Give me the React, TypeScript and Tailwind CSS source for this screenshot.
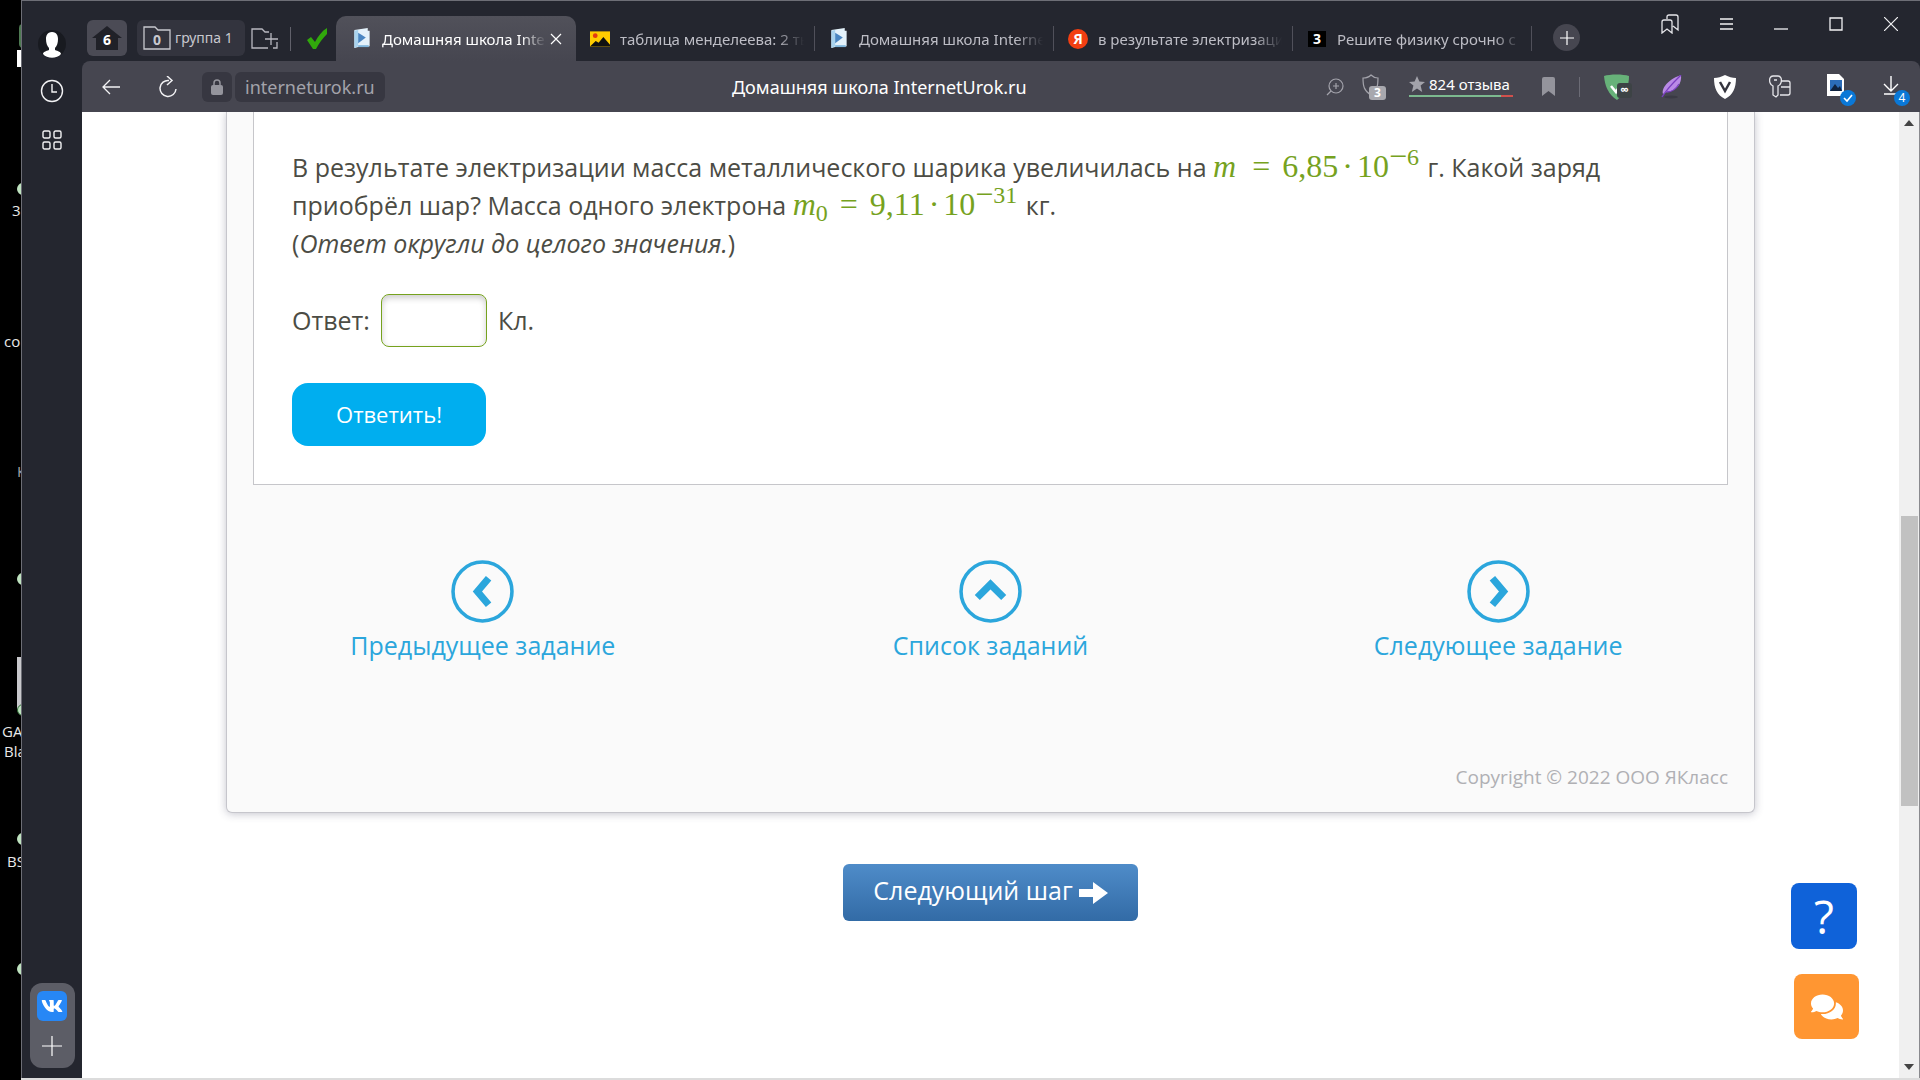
import type { ReactNode } from "react";
import { FaComments, FaVk } from "react-icons/fa";

interface TabItem {
  title: string;
  icon: ReactNode;
  active?: boolean;
}

const BookIcon = () => (
  <svg viewBox="0 0 18 22" className="h-[21px] w-[18px]">
    <path d="M1 2 15 0v3l2 0v16l-3 1-9 0-4 1z" fill="#e4f2fb" />
    <path d="M1 3 5 2v17l-4 2z" fill="#a9d3ee" />
    <path d="M5 18h11v2H5z" fill="#7fb6dc" />
    <path d="M5 5v11l8-6z" fill="#4a86c2" />
  </svg>
);

const PictureIcon = () => (
  <svg viewBox="0 0 21 16" className="h-4 w-[21px]">
    <path d="M0 0h21v16H0z" fill="#fc0" />
    <circle cx="5.5" cy="4.5" r="2.5" fill="#e33b12" />
    <path d="M0 16 6 10l3 2 5-6 7 8v2z" fill="#111" />
  </svg>
);

const tabs: TabItem[] = [
  { title: "Домашняя школа InternetUrok.ru", icon: <BookIcon />, active: true },
  { title: "таблица менделеева: 2 тыс", icon: <PictureIcon /> },
  { title: "Домашняя школа InternetUrok.ru", icon: <BookIcon /> },
  {
    title: "в результате электризации",
    icon: (
      <span className="flex size-5 items-center justify-center rounded-full bg-[#f33f12] text-sm font-bold text-white">
        Я
      </span>
    ),
  },
  {
    title: "Решите физику срочно с",
    icon: (
      <span className="flex h-4 w-[18px] items-center justify-center bg-black text-sm font-bold text-white">
        3
      </span>
    ),
  },
];

function Tab({ title, icon, active }: TabItem) {
  return (
    <div
      className={
        active
          ? "flex h-[45px] w-60 shrink items-center rounded-t-[10px] bg-linear-to-b from-[#51515a] to-[#464650] pr-3.5 pl-4 text-white"
          : "flex h-[45px] w-[239px] shrink items-center pr-0 pl-3.5 text-[#bdbdc5]"
      }
    >
      <span className="flex w-5 shrink-0 justify-center">{icon}</span>
      <button className="ml-[10px] min-w-0 flex-1 overflow-hidden text-left text-[15px] leading-6 whitespace-nowrap [mask-image:linear-gradient(to_right,#000_85%,transparent)]">
        {title}
      </button>
      {active ? (
        <button aria-label="Закрыть вкладку" className="ml-1">
          <svg viewBox="0 0 12 12" className="size-3" stroke="#fff" strokeWidth="1.2">
            <path d="m1 1 10 10M11 1 1 11" />
          </svg>
        </button>
      ) : (
        <span className="ml-2.5 h-[25px] w-px bg-[#50505a]" />
      )}
    </div>
  );
}

function TabBar() {
  return (
    <div className="flex h-[60px] items-end bg-[#24262f]">
      <button className="mb-[5px] ml-[5px] flex h-9 w-10 items-center justify-center rounded-md bg-[#4b4b55]">
        <span className="relative flex">
          <svg viewBox="0 0 30 24" className="h-6 w-[30px]" fill="#202128">
            <path d="M15 0 30 12h-4v12H4V12H0z" />
          </svg>
          <b className="absolute inset-x-0 top-1 text-sm text-white">6</b>
        </span>
      </button>
      <button className="mb-[5px] ml-[10px] flex h-9 w-[108px] items-center gap-1 rounded-md bg-[#33343e] pl-1.5 text-sm text-[#c8c8ce]">
        <span className="relative flex">
          <svg viewBox="0 0 28 24" className="h-6 w-7" fill="none" stroke="#c8c8ce" strokeWidth="1.3">
            <path d="M1 1h11l3 3h12v19H1z" />
          </svg>
          <b className="absolute inset-x-0 top-1 text-sm">0</b>
        </span>
        группа 1
      </button>
      <button aria-label="Новая группа" className="mb-[11px] ml-1.5">
        <svg viewBox="0 0 28 22" className="h-[22px] w-7" fill="none" stroke="#b8b8c0" strokeWidth="1.3">
          <path d="M17 20H1V1h10l3 3h4M26 14v6h-4M20 5v12M14 11h13" />
        </svg>
      </button>
      <span className="mb-2.5 ml-[11px] h-6 w-px bg-[#61616b]" />
      <svg viewBox="0 0 22 22" className="mb-[11px] ml-[15px] h-[22px] w-[22px] shrink-0">
        <path d="M1 12 5 9l4 5C12 8 16 3 21 0v6C17 10 13 15 10 21H7z" fill="#31a80c" />
      </svg>
      <nav className="ml-2 flex min-w-0 items-end">
        {tabs.map((tab, i) => (
          <Tab key={i} {...tab} />
        ))}
      </nav>
      <button
        aria-label="Новая вкладка"
        className="mb-2.5 ml-[21px] flex size-[27px] shrink-0 items-center justify-center rounded-full bg-[#464650]"
      >
        <svg viewBox="0 0 14 14" className="size-3.5" stroke="#fff" strokeWidth="1.2">
          <path d="M7 0v14M0 7h14" />
        </svg>
      </button>
      <div className="mb-[27px] ml-auto flex shrink-0 items-center gap-[41px] pr-[22px]">
        <button aria-label="Закладки">
          <svg viewBox="0 0 18 20" className="h-5 w-[18px]" fill="none" stroke="#e6e6ea" strokeWidth="1.3">
            <path d="M1 8q0-2 2-2h6q2 0 2 2v11l-5-4-5 4zM6 5V3q0-2 2-2h7q2 0 2 2v13l-5-4" />
          </svg>
        </button>
        <button aria-label="Меню">
          <svg viewBox="0 0 13 12" className="h-3 w-[13px]" stroke="#f2f2f4" strokeWidth="1.3">
            <path d="M0 1h13M0 6h13M0 11h13" />
          </svg>
        </button>
        <button aria-label="Свернуть">
          <svg viewBox="0 0 14 12" className="h-3 w-3.5" stroke="#f2f2f4" strokeWidth="1.3">
            <path d="M0 11h14" />
          </svg>
        </button>
        <button aria-label="Развернуть">
          <svg viewBox="0 0 14 14" className="size-3.5" fill="none" stroke="#f2f2f4" strokeWidth="1.3">
            <path d="M1 1h12v12H1z" />
          </svg>
        </button>
        <button aria-label="Закрыть">
          <svg viewBox="0 0 14 14" className="size-3.5" stroke="#f2f2f4" strokeWidth="1.2">
            <path d="m0 0 14 14M14 0 0 14" />
          </svg>
        </button>
      </div>
    </div>
  );
}

function Extensions() {
  return (
    <div className="flex items-center">
      <button aria-label="Масштаб">
        <svg viewBox="0 0 18 18" className="size-[18px]" fill="none" stroke="#a3a3ab" strokeWidth="1.2">
          <circle cx="10" cy="8" r="7" />
          <path d="m5 13-4 4M7 8h6M10 5v6" />
        </svg>
      </button>
      <button aria-label="Защита" className="relative ml-[18px]">
        <svg viewBox="0 0 24 26" className="h-[26px] w-6">
          <path d="M9 1c2 2 5 3 7 3 0 8-1 13-7 17C2 17 1 12 1 4c3 0 6-1 8-3z" fill="none" stroke="#a3a3ab" strokeWidth="1.2" />
          <rect x="7" y="12" width="17" height="14" rx="3" fill="#a8a8ae" />
        </svg>
        <b className="absolute top-3 left-[7px] w-[17px] text-center text-xs leading-[14px] text-white">3</b>
      </button>
      <button className="ml-[23px] flex w-[104px] flex-col pb-1 text-[15px] text-white">
        <span className="flex items-center gap-1 leading-[22px] whitespace-nowrap">
          <svg viewBox="0 0 20 20" className="size-4 shrink-0" fill="#a3a3ab">
            <path d="m10 0 3 7 7 .5-5.500 4.500 2 8L10 15.500 3.500 20l2-8L0 7.500 7 7z" />
          </svg>
          824 отзыва
        </span>
        <span className="flex h-0.5 w-full">
          <span className="flex-8 bg-[#7cb98f]" />
          <span className="flex-1 bg-[#d0504c]" />
        </span>
      </button>
      <button aria-label="В закладки" className="ml-[29px]">
        <svg viewBox="0 0 13 19" className="h-[19px] w-[13px]" fill="#94949c">
          <path d="M0 2q0-2 2-2h9q2 0 2 2v17l-6.500-5L0 19z" />
        </svg>
      </button>
      <span className="ml-[24px] h-5 w-px bg-[#6b6b75]" />
      <button aria-label="AdGuard" className="relative ml-6">
        <svg viewBox="0 0 28 26" className="h-[26px] w-7">
          <path d="M0 2C6 0 19 0 25 2c0 10-3 17-12 24C4 20 1 12 0 2z" fill="#67b279" />
          <path d="m7 12 5 6 5-8" fill="none" stroke="#fff" strokeWidth="2.500" />
          <rect x="13" y="9" width="15" height="15" rx="3" fill="#3d4345" />
        </svg>
        <b className="absolute top-[9px] left-[13px] w-[15px] text-center text-xs leading-[14px] text-white">∞</b>
      </button>
      <button aria-label="Перо" className="ml-[29px]">
        <svg viewBox="0 0 22 24" className="h-6 w-[22px]">
          <path d="M2 19C0 12 10 3 20 0c1 8-4 16-14 17z" fill="#b98ae6" />
          <path d="M20 0C14 6 8 11 1 22M18 9c-3 5-7 8-12 8" fill="none" stroke="#7a3fc0" strokeWidth="1.300" />
          <ellipse cx="10" cy="22" rx="7" ry="1.500" fill="#3a3a44" />
        </svg>
      </button>
      <button aria-label="VPN" className="ml-[31px]">
        <svg viewBox="0 0 22 24" className="h-6 w-[22px]">
          <path d="M11 0c4 2 7 3 11 3 0 10-3 17-11 21C3 20 0 13 0 3c4 0 7-1 11-3z" fill="#fff" />
          <path d="m6 7 5 9 5-9" fill="none" stroke="#34343e" strokeWidth="2.500" />
        </svg>
      </button>
      <button aria-label="Пароли" className="ml-[33px]">
        <svg viewBox="0 0 22 24" className="h-6 w-[22px]" fill="none" stroke="#e6e6ea" strokeWidth="1.300">
          <path d="M4 11C1 10 0 6 1 3q1-2 3-2h5q2 0 3 2c1 3 0 7-3 8v9l-2 2-3-2zM5 5h3M12 6h7q2 0 2 2v10q0 2-2 2h-8M12 12h9" />
        </svg>
      </button>
      <button aria-label="Файл" className="relative ml-[35px]">
        <svg viewBox="0 -6 30 38" className="h-[38px] w-[30px]">
          <path d="M1 0h12l5 5v17H1z" fill="#fff" />
          <path d="M4 6h12v11H4z" fill="#2b6cb8" />
          <path d="m4 17 5-7 3 4 2-2 2 5z" fill="#10233f" />
          <circle cx="22" cy="24" r="8" fill="#0a78d7" />
          <path d="m18 24 3 3 5-6" fill="none" stroke="#fff" strokeWidth="1.600" />
        </svg>
      </button>
      <button aria-label="Загрузки" className="relative ml-[27px]">
        <svg viewBox="0 -6 30 38" className="h-[38px] w-[30px]">
          <path d="M8 2v15M1 10l7 7 7-7M1 20h12" fill="none" stroke="#fff" strokeWidth="1.400" />
          <circle cx="19" cy="24" r="8" fill="#0a78d7" />
        </svg>
        <span className="absolute top-[22px] left-[11px] w-4 text-center text-xs leading-4 text-white">4</span>
      </button>
    </div>
  );
}

function Toolbar() {
  return (
    <div className="grid h-[51px] grid-cols-[650px_1fr_auto] items-center rounded-t-lg bg-[#464650]">
      <div className="flex items-center pl-5">
        <button aria-label="Назад">
          <svg viewBox="0 0 18 16" className="h-4 w-[18px]" fill="none" stroke="#f2f2f4" strokeWidth="1.300">
            <path d="M18 8H1M8 1 1 8l7 7" />
          </svg>
        </button>
        <button aria-label="Обновить" className="ml-[39px]">
          <svg viewBox="0 0 18 22" className="h-[22px] w-[18px]" fill="none" stroke="#f2f2f4" strokeWidth="1.500">
            <path d="M10 4.500A8 8 0 1 0 17 13M8 0l5 4.500L8 9" />
          </svg>
        </button>
        <span className="ml-[25px] flex h-[30px] w-[30px] items-center justify-center rounded-md bg-[#373741]">
          <svg viewBox="0 0 12 16" className="h-4 w-3">
            <rect y="6" width="12" height="10" rx="2" fill="#94949c" />
            <path d="M3 7V4a3 3 0 0 1 6 0v3" fill="none" stroke="#94949c" strokeWidth="1.500" />
          </svg>
        </span>
        <a
          href="#"
          className="ml-[3px] flex h-[30px] items-center rounded-md bg-[#373741] px-2.5 text-lg leading-[30px] text-[#a3a3ab]"
        >
          interneturok.ru
        </a>
      </div>
      <div className="text-lg whitespace-nowrap text-white">Домашняя школа InternetUrok.ru</div>
      <div className="flex justify-end pr-[7px]">
        <Extensions />
      </div>
    </div>
  );
}

function Sidebar() {
  return (
    <aside className="flex w-[61px] shrink-0 flex-col items-center border-l border-[#6d6e76] bg-[#24262f] pt-[29px] pb-2.5">
      <button aria-label="Профиль">
        <svg viewBox="0 0 28 28" className="size-7">
          <circle cx="14" cy="14" r="14" fill="#181a20" />
          <path d="M14 2c5 0 6 4 6 7 0 4-1 7-3 9v2c3 1 6 2 6 4-4 5-14 5-18 0 0-2 3-3 6-4v-2c-2-2-3-5-3-9 0-3 1-7 6-7z" fill="#fff" />
        </svg>
      </button>
      <button aria-label="История" className="mt-[21px]">
        <svg viewBox="0 0 24 24" className="size-6" fill="none" stroke="#f2f2f4" strokeWidth="1.400">
          <circle cx="12" cy="12" r="10.500" />
          <path d="M12 5v8h5" />
        </svg>
      </button>
      <button aria-label="Приложения" className="mt-[27px]">
        <svg viewBox="0 0 20 20" className="size-5" fill="none" stroke="#f2f2f4" strokeWidth="1.400">
          <rect x="1" y="1" width="7" height="7" rx="1.500" />
          <rect x="12" y="1" width="7" height="7" rx="1.500" />
          <rect x="1" y="12" width="7" height="7" rx="1.500" />
          <rect x="12" y="12" width="7" height="7" rx="1.500" />
        </svg>
      </button>
      <div className="mt-auto flex w-[45px] flex-col items-center gap-[15px] rounded-xl bg-[#5c5d66] pt-2 pb-3">
        <button
          aria-label="ВКонтакте"
          className="flex size-[30px] items-center justify-center rounded-md bg-[#2787f5] text-[22px] text-white"
        >
          <FaVk />
        </button>
        <button aria-label="Добавить">
          <svg viewBox="0 0 20 20" className="size-5" stroke="#fff" strokeWidth="1.200">
            <path d="M10 0v20M0 10h20" />
          </svg>
        </button>
      </div>
    </aside>
  );
}

// Strip of the desktop that stays visible left of the browser window
function Desktop() {
  return (
    <div className="relative w-[21px] shrink-0 overflow-hidden bg-black text-[15px] leading-5 text-[#e8e8e8]">
      <span className="absolute top-6 left-[19px] h-6 w-2 rounded-full bg-[#4e7a52]" />
      <span className="absolute top-[50px] left-[17px] h-[17px] w-1 bg-white" />
      <span className="absolute top-[183px] left-[17px] size-3 rounded-full bg-[#bfe3c0]" />
      <span className="absolute top-[200px] left-3">3</span>
      <span className="absolute top-[331px] left-1">co</span>
      <span className="absolute top-[461px] left-[17px] text-[#a5a5a5]">К</span>
      <span className="absolute top-[573px] left-[17px] size-3 rounded-full bg-[#bfe3c0]" />
      <span className="absolute top-[657px] left-[17px] h-[52px] w-1 bg-[#c9c9cd]" />
      <span className="absolute top-[704px] left-[17px] size-3 rounded-full border border-[#2f6b35] bg-[#bfe3c0]" />
      <span className="absolute top-[721px] left-0.5">GA</span>
      <span className="absolute top-[741px] left-1">Bla</span>
      <span className="absolute top-[833px] left-[17px] size-3 rounded-full bg-[#bfe3c0]" />
      <span className="absolute top-[851px] left-[7px]">BS</span>
      <span className="absolute top-[963px] left-[17px] size-3 rounded-full bg-[#bfe3c0]" />
    </div>
  );
}

function Formula({ sub, value, power }: { sub?: string; value: string; power: string }) {
  return (
    <span className="mr-0.5 font-['Liberation_Serif',serif] text-[32px] leading-0 whitespace-nowrap text-[#76a21e]">
      <i>m</i>
      {sub && <span className="align-[-6px] text-2xl leading-0">{sub}</span>}
      <span className={sub ? "mr-3 ml-3" : "mr-3 ml-4"}>=</span>
      {value}
      <span className="mx-1">·</span>
      10
      <span className="align-[10px] leading-0">−</span>
      <span className="align-[12px] text-2xl leading-0">{power}</span>
    </span>
  );
}

const navLinks = [
  { label: "Предыдущее задание", path: "M38 19 27 32l11 13" },
  { label: "Список заданий", path: "M19 38 32 25l13 13" },
  { label: "Следующее задание", path: "M26 19l11 13-11 13" },
];

function TaskCard() {
  return (
    <section className="mx-36 rounded-b-md border border-t-0 border-[#c6c6cc] bg-[#fafafa] px-[26px] pb-[21px] shadow-[0_1px_8px_rgba(60,60,90,0.3)]">
      <form className="border border-t-0 border-[#c6c6ca] bg-white px-[38px] pt-9 pb-[38px] text-[25px] text-[#4c4c44]">
        <p className="leading-[38px]">
          В результате электризации масса металлического шарика увеличилась на{" "}
          <Formula value="6,85" power="6" /> г. Какой заряд приобрёл шар? Масса одного электрона{" "}
          <Formula sub="0" value="9,11" power="31" /> кг.
          <br />(<i>Ответ округли до целого значения.</i>)
        </p>
        <div className="mt-8 flex items-center gap-[11px]">
          <label htmlFor="answer">Ответ:</label>
          <input
            id="answer"
            type="text"
            className="h-[53px] w-[106px] rounded-lg border border-[#76a21e] bg-white px-2 shadow-[inset_0_3px_6px_rgba(0,0,0,0.2)] outline-none"
          />
          <span>Кл.</span>
        </div>
        <button type="button" className="mt-9 h-[63px] w-[194px] rounded-2xl bg-[#00aeef] text-[22px] text-white">
          Ответить!
        </button>
      </form>
      <nav className="-mx-6 mt-[75px] grid grid-cols-3">
        {navLinks.map((link) => (
          <a key={link.label} href="#" className="flex flex-col items-center text-[25px] leading-9 text-[#2ba6dc]">
            <svg viewBox="1 1 62 62" className="mb-1 size-[63px]" fill="none" stroke="#2ba6dc">
              <circle cx="32" cy="32" r="29" strokeWidth="3.500" />
              <path d={link.path} strokeWidth="7" />
            </svg>
            {link.label}
          </a>
        ))}
      </nav>
      <p className="mt-[100px] text-right text-[19px] leading-7 text-[#b0b0b4]">Copyright © 2022 ООО ЯКласс</p>
    </section>
  );
}

function ScrollBar() {
  return (
    <div className="flex w-[21px] shrink-0 flex-col items-center border-r border-[#8a8a8e] bg-[#f0f0f0]">
      <svg viewBox="0 0 10 6" className="mt-2 h-1.5 w-2.5" fill="#444">
        <path d="M0 6 5 0l5 6z" />
      </svg>
      <div className="flex-[390]" />
      <div className="w-[17px] flex-[290] bg-[#c1c1c1]" />
      <div className="flex-[258]" />
      <svg viewBox="0 0 10 6" className="mb-2 h-1.5 w-2.5" fill="#444">
        <path d="M0 0 5 6l5-6z" />
      </svg>
    </div>
  );
}

export default function App() {
  return (
    <div className="flex h-screen overflow-hidden font-['Open_Sans','Noto_Sans',sans-serif]">
      <Desktop />
      <div className="flex min-w-0 flex-1 flex-col border-t border-[#6d6e76]">
        <div className="flex min-h-0 flex-1">
          <Sidebar />
          <div className="flex min-w-0 flex-1 flex-col bg-[#24262f] font-['Noto_Sans','Open_Sans',sans-serif]">
            <TabBar />
            <Toolbar />
            <div className="flex min-h-0 flex-1 bg-white">
              <main className="relative min-w-0 flex-1 overflow-hidden font-['Open_Sans','Noto_Sans',sans-serif]">
                <TaskCard />
                <div className="mt-[51px] flex justify-center">
                  <button className="flex h-[57px] w-[295px] items-center justify-center gap-1.5 rounded-md bg-linear-to-b from-[#4f8cc9] to-[#326ba6] text-[25px] text-white">
                    <span className="pb-1">Следующий шаг</span>
                    <svg viewBox="0 0 29 22" className="h-[22px] w-[29px]" fill="#fff">
                      <path d="M0 7h14V0l15 11-15 11v-7H0z" />
                    </svg>
                  </button>
                </div>
                <button className="absolute right-[42px] bottom-[129px] size-[66px] rounded-lg bg-[#0f62d9] text-[46px] leading-none text-white">
                  ?
                </button>
                <button
                  aria-label="Чат"
                  className="absolute right-10 bottom-[39px] flex size-[65px] items-center justify-center rounded-lg bg-[#ff9632] text-[32px] text-white"
                >
                  <FaComments />
                </button>
              </main>
              <ScrollBar />
            </div>
          </div>
        </div>
        <div className="h-0.5 bg-[#dcdcdc]" />
      </div>
    </div>
  );
}
